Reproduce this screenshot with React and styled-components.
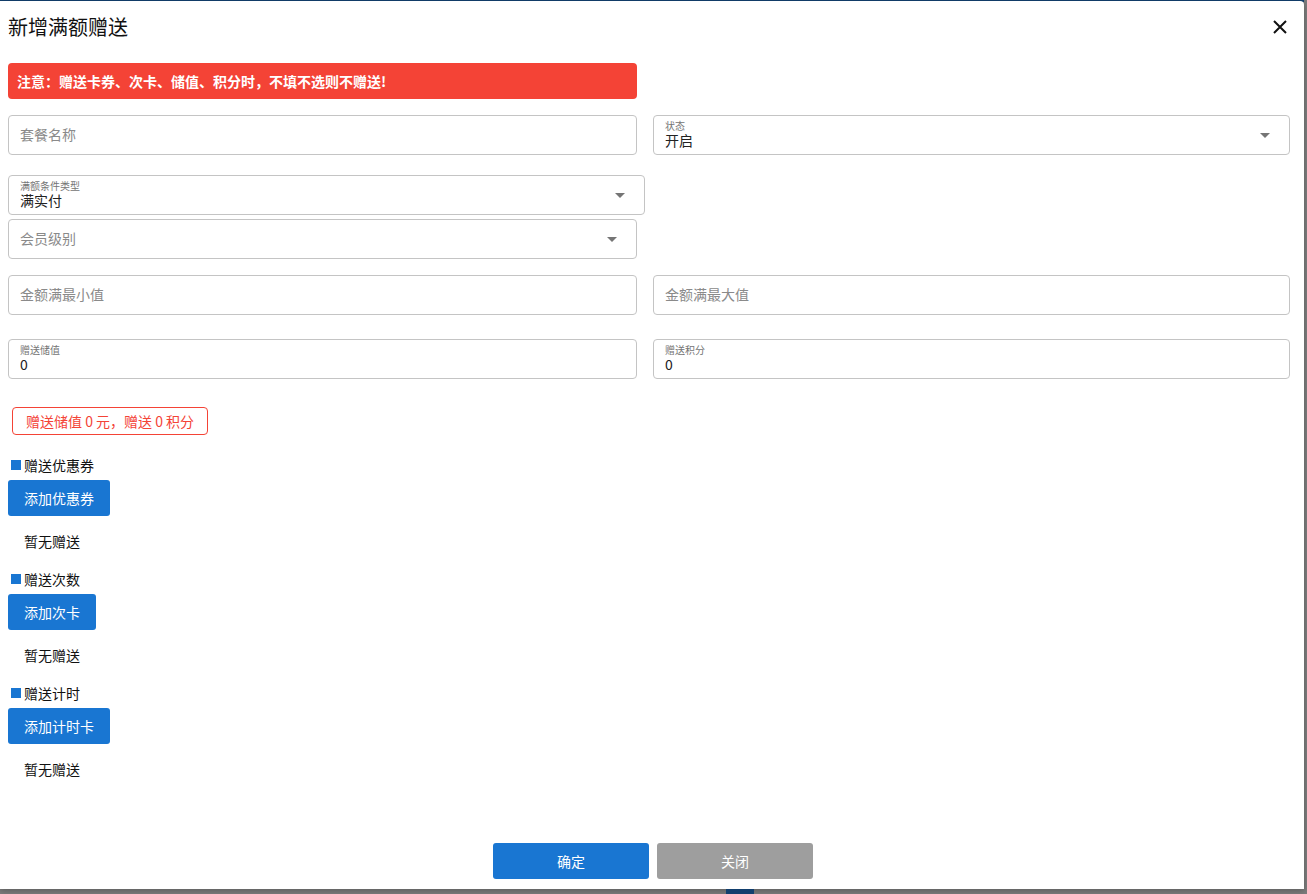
import React from "react";
import styled, { createGlobalStyle } from "styled-components";

const GlobalStyle = createGlobalStyle`
  html, body {
    margin: 0;
    padding: 0;
    background: #7c7c7c;
    font-family: "Noto Sans CJK SC", "Noto Sans", "Liberation Sans", sans-serif;
    overflow: hidden;
  }
  * { box-sizing: border-box; }
`;

const sections = [
  { title: "赠送优惠券", button: "添加优惠券" },
  { title: "赠送次数", button: "添加次卡" },
  { title: "赠送计时", button: "添加计时卡" },
];

function Field({ label, value, placeholder, select, width }) {
  return (
    <FieldBox width={width}>
      {label ? (
        <Filled>
          <span className="label">{label}</span>
          <span className="value">{value}</span>
        </Filled>
      ) : (
        <Placeholder>{placeholder}</Placeholder>
      )}
      {select && <Arrow />}
    </FieldBox>
  );
}

export default function App() {
  return (
    <>
      <GlobalStyle />
      <Page>
        <TopLine />
        <Dialog>
          <Header>
            <h2>新增满额赠送</h2>
            <CloseButton aria-label="close">
              <svg width="16" height="16" viewBox="0 0 16 16">
                <path d="M2 2 L14 14 M14 2 L2 14" stroke="#111" strokeWidth="2" />
              </svg>
            </CloseButton>
          </Header>

          <Content>
            <Alert>注意：赠送卡券、次卡、储值、积分时，不填不选则不赠送!</Alert>

            <Row gap={16}>
              <Field placeholder="套餐名称" />
              <Field label="状态" value="开启" select width={637} />
            </Row>

            <Stack>
              <Field label="满额条件类型" value="满实付" select width={637} />
              <Field placeholder="会员级别" select />
            </Stack>

            <Row gap={16} top={16}>
              <Field placeholder="金额满最小值" />
              <Field placeholder="金额满最大值" width={637} />
            </Row>

            <Row gap={16} top={24}>
              <Field label="赠送储值" value="0" />
              <Field label="赠送积分" value="0" width={637} />
            </Row>

            <Summary>赠送储值 0 元，赠送 0 积分</Summary>

            {sections.map((s) => (
              <Section key={s.title}>
                <SectionTitle>{s.title}</SectionTitle>
                <BlueButton>{s.button}</BlueButton>
                <Empty>暂无赠送</Empty>
              </Section>
            ))}
          </Content>

          <Footer>
            <FooterButton>确定</FooterButton>
            <FooterButton secondary>关闭</FooterButton>
          </Footer>
        </Dialog>
        <BottomStrip>
          <span className="blue" />
        </BottomStrip>
      </Page>
    </>
  );
}

const Page = styled.div`
  width: 1307px;
  height: 894px;
  display: flex;
  flex-direction: column;
`;

const TopLine = styled.div`
  height: 2px;
  width: 1304px;
  background: #123f6e;
`;

const Dialog = styled.div`
  width: 1304px;
  height: 888px;
  background: #fff;
  border-top-right-radius: 4px;
  margin-top: -1px;
  display: flex;
  flex-direction: column;
  box-shadow: 0 2px 6px rgba(0, 0, 0, 0.25);
`;

const Header = styled.div`
  height: 52px;
  padding: 0 16px 0 8px;
  display: flex;
  align-items: center;
  justify-content: space-between;

  h2 {
    margin: 0;
    font-size: 20px;
    font-weight: 400;
    color: #111;
    line-height: 28px;
  }
`;

const CloseButton = styled.button`
  border: 0;
  background: transparent;
  padding: 0;
  width: 16px;
  height: 16px;
  display: flex;
`;

const Content = styled.div`
  flex: 1;
  padding: 10px 8px 0 8px;
  display: flex;
  flex-direction: column;
`;

const Alert = styled.div`
  width: 629px;
  height: 36px;
  background: #f44336;
  border-radius: 4px;
  color: #fff;
  font-size: 14px;
  font-weight: 700;
  padding-left: 9px;
  display: flex;
  align-items: center;
  margin-bottom: 16px;
`;

const Row = styled.div`
  display: flex;
  gap: ${(p) => p.gap}px;
  margin-top: ${(p) => p.top || 0}px;
`;

const Stack = styled.div`
  display: flex;
  flex-direction: column;
  gap: 4px;
  margin-top: 20px;
`;

const FieldBox = styled.div`
  position: relative;
  width: ${(p) => p.width || 629}px;
  height: 40px;
  border: 1px solid #c4c4c4;
  border-radius: 4px;
  padding: 0 11px;
  display: flex;
  align-items: center;
`;

const Placeholder = styled.span`
  font-size: 14px;
  color: #8a8a8a;
  margin-top: -3px;
`;

const Filled = styled.div`
  align-self: flex-start;
  display: flex;
  flex-direction: column;
  padding-top: 3px;

  .label {
    font-size: 10px;
    line-height: 13px;
    height: 13px;
    overflow: visible;
    color: #757575;
  }
  .value {
    font-size: 14px;
    line-height: 17px;
    color: #222;
  }
`;

const Arrow = styled.span`
  position: absolute;
  right: 19px;
  top: 17px;
  width: 0;
  height: 0;
  border-left: 5px solid transparent;
  border-right: 5px solid transparent;
  border-top: 5px solid #757575;
`;

const Summary = styled.div`
  align-self: flex-start;
  margin: 28px 0 20px 4px;
  height: 28px;
  padding: 0 13px;
  border: 1px solid #f44336;
  border-radius: 4px;
  color: #f44336;
  font-size: 14px;
  display: flex;
  align-items: center;
`;

const Section = styled.div`
  display: flex;
  flex-direction: column;
  align-items: flex-start;
`;

const SectionTitle = styled.div`
  font-size: 14px;
  color: #111;
  line-height: 20px;
  display: flex;
  align-items: center;

  &::before {
    content: "";
    width: 10px;
    height: 10px;
    background: #1976d2;
    margin: 0 3px 0 3px;
  }
`;

const BlueButton = styled.button`
  margin-top: 5px;
  height: 36px;
  padding: 0 16px;
  border: 0;
  border-radius: 3px;
  background: #1976d2;
  color: #fff;
  font-family: inherit;
  font-size: 14px;
`;

const Empty = styled.div`
  font-size: 14px;
  color: #111;
  padding-left: 16px;
  line-height: 20px;
  margin: 15px 0 18px;
`;

const Footer = styled.div`
  display: flex;
  justify-content: center;
  gap: 8px;
  padding-bottom: 10px;
  padding-left: 2px;
`;

const FooterButton = styled.button`
  width: 156px;
  height: 36px;
  border: 0;
  border-radius: 3px;
  background: ${(p) => (p.secondary ? "#9e9e9e" : "#1976d2")};
  color: #fff;
  font-family: inherit;
  font-size: 14px;
`;

const BottomStrip = styled.div`
  flex: 1;
  display: flex;
  padding-left: 726px;

  .blue {
    width: 28px;
    background: #123f6e;
  }
`;
